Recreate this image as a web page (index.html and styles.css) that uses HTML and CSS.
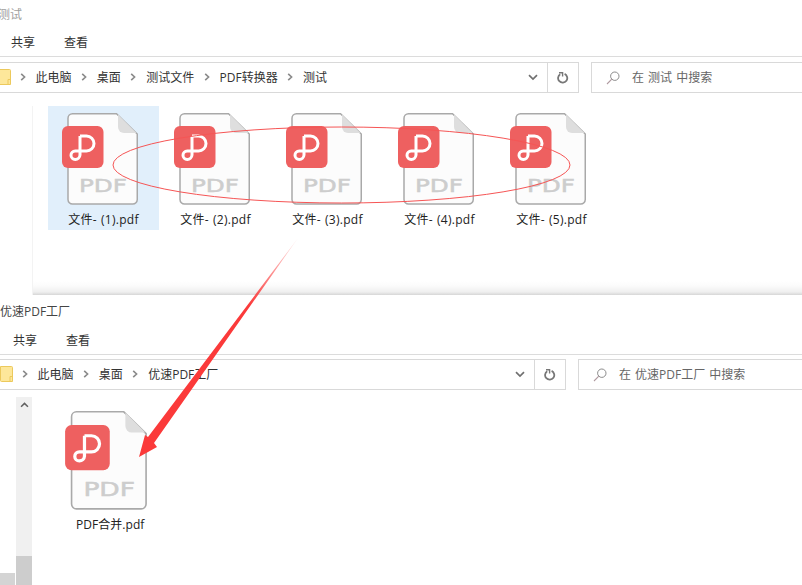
FILE: index.html
```html
<!DOCTYPE html>
<html lang="zh-CN">
<head>
<meta charset="utf-8">
<title>PDF合并</title>
<link rel="stylesheet" href="styles.css">
</head>
<body>
<svg class="defs" width="0" height="0" aria-hidden="true">
  <symbol id="pdf" viewBox="0 0 76 92">
    <path class="page" d="M10.5 .75H54.5L75.25 21V86.5a4.5 4.5 0 0 1-4.5 4.5H10.5a4.5 4.5 0 0 1-4.5-4.5V5.25a4.5 4.5 0 0 1 4.5-4.5Z"/>
    <path class="fold" d="M56 1.5L74.5 20H62a6 6 0 0 1-6-6Z"/>
    <rect class="badge" x="0" y="13" width="41.5" height="42" rx="6"/>
    <path class="logo" d="M18 23H24.5a7.5 7.5 0 0 1 0 15H13.2a4.2 4.2 0 0 0 0 8.4a4.7 4.7 0 0 0 4.8-4.4V23"/>
    <text class="pdfword" x="17" y="79" textLength="48" lengthAdjust="spacingAndGlyphs">PDF</text>
  </symbol>
  <symbol id="chev" viewBox="0 0 6 8"><path d="M1.2 .8L4.6 4L1.2 7.2" fill="none" stroke="#8a8a8a" stroke-width="1.6"/></symbol>
  <symbol id="folder" viewBox="0 0 13 16"><path d="M.5 .5H11.5a1 1 0 0 1 1 1V15.5H1.5a1 1 0 0 1-1-1Z" fill="#fde79a" stroke="#ecc95c"/><path d="M10 15.5V10.5H12.5" fill="none" stroke="#ecc95c"/></symbol>
  <symbol id="down" viewBox="0 0 10 7"><path d="M1 1.2L5 5L9 1.2" fill="none" stroke="#707070" stroke-width="1.7"/></symbol>
  <symbol id="refresh" viewBox="0 0 12 12"><path d="M7.6 1.9A4.6 4.6 0 1 1 3.2 2.2" fill="none" stroke="#777" stroke-width="1.8"/><path d="M2 .8H5.6V4.4" fill="none" stroke="#777" stroke-width="1.4"/></symbol>
  <symbol id="search" viewBox="0 0 14 14"><circle cx="8.8" cy="5.2" r="4.2" fill="none" stroke="#8a8a8a"/><path d="M5.8 8.2L1 13" stroke="#b09aa0" stroke-width="1.1"/></symbol>
</svg>

<div class="screen">
  <section class="window window-top">
    <div class="title">测试</div>
    <nav class="ribbon"><span>共享</span><span>查看</span></nav>
    <div class="toolbar">
      <div class="address">
        <div class="crumbs">
          <svg class="folder"><use href="#folder"/></svg>
          <svg class="chev"><use href="#chev"/></svg><span>此电脑</span>
          <svg class="chev"><use href="#chev"/></svg><span>桌面</span>
          <svg class="chev"><use href="#chev"/></svg><span>测试文件</span>
          <svg class="chev"><use href="#chev"/></svg><span>PDF转换器</span>
          <svg class="chev"><use href="#chev"/></svg><span>测试</span>
        </div>
        <svg class="down"><use href="#down"/></svg>
        <div class="refresh"><svg><use href="#refresh"/></svg></div>
      </div>
      <div class="searchbox"><svg><use href="#search"/></svg><span>在 测试 中搜索</span></div>
    </div>
    <div class="content content-top">
      <div class="files">
        <figure class="file selected"><svg class="icon"><use href="#pdf"/></svg><figcaption>文件- (1).pdf</figcaption></figure>
        <figure class="file"><svg class="icon"><use href="#pdf"/></svg><figcaption>文件- (2).pdf</figcaption></figure>
        <figure class="file"><svg class="icon"><use href="#pdf"/></svg><figcaption>文件- (3).pdf</figcaption></figure>
        <figure class="file"><svg class="icon"><use href="#pdf"/></svg><figcaption>文件- (4).pdf</figcaption></figure>
        <figure class="file"><svg class="icon"><use href="#pdf"/></svg><figcaption>文件- (5).pdf</figcaption></figure>
      </div>
    </div>
  </section>

  <section class="window window-bottom">
    <div class="title">优速PDF工厂</div>
    <nav class="ribbon"><span>共享</span><span>查看</span></nav>
    <div class="toolbar">
      <div class="address">
        <div class="crumbs">
          <svg class="folder"><use href="#folder"/></svg>
          <svg class="chev"><use href="#chev"/></svg><span>此电脑</span>
          <svg class="chev"><use href="#chev"/></svg><span>桌面</span>
          <svg class="chev"><use href="#chev"/></svg><span>优速PDF工厂</span>
        </div>
        <svg class="down"><use href="#down"/></svg>
        <div class="refresh"><svg><use href="#refresh"/></svg></div>
      </div>
      <div class="searchbox"><svg><use href="#search"/></svg><span>在 优速PDF工厂 中搜索</span></div>
    </div>
    <div class="content content-bottom">
      <div class="gutter"><div class="corner"></div></div>
      <div class="scrollbar">
        <svg class="up" viewBox="0 0 10 7"><path d="M1 5.5L5 1.6L9 5.5" fill="none" stroke="#606060" stroke-width="1.8"/></svg>
        <div class="thumb"></div>
      </div>
      <figure class="file file-large"><svg class="icon"><use href="#pdf"/></svg><figcaption>PDF合并.pdf</figcaption></figure>
    </div>
  </section>

  <svg class="markup" viewBox="0 0 802 585" aria-hidden="true">
    <defs>
      <linearGradient id="fade" gradientUnits="userSpaceOnUse" x1="298" y1="238" x2="250" y2="306">
        <stop offset="0" stop-color="#fb3a3a" stop-opacity=".1"/>
        <stop offset="1" stop-color="#fb3a3a"/>
      </linearGradient>
    </defs>
    <ellipse cx="341.5" cy="165" rx="228.5" ry="38" fill="none" stroke="#f65555" stroke-width="1"/>
    <polygon points="298,238 154,443 157,447 139,457 145,435 148,437" fill="url(#fade)"/>
  </svg>
</div>
</body>
</html>
```
FILE: styles.css
```css
* { box-sizing: border-box; }
html, body { margin: 0; padding: 0; background: #fff; }
body {
  font-family: "Open Sans", "Noto Sans CJK SC", sans-serif;
  font-size: 12px;
  color: #222;
}
.defs { position: absolute; }
.screen {
  position: relative;
  width: 802px;
  height: 585px;
  overflow: hidden;
}
.markup {
  position: absolute;
  inset: 0;
  width: 802px;
  height: 585px;
  pointer-events: none;
}

/* windows */
.window { display: flex; flex-direction: column; }
.window-top { height: 295px; }
.window-bottom { height: 290px; }
.title {
  display: flex;
  align-items: center;
  color: #444;
}
.window-top .title { height: 28px; margin-left: -2px; color: #a0a0a0; }
.window-bottom .title { height: 30px; padding-top: 2px; }
.ribbon {
  display: flex;
  gap: 29px;
  align-items: center;
  border-bottom: 1px solid #dcdcdc;
  color: #333;
}
.window-top .ribbon { height: 29px; padding-left: 11px; }
.window-bottom .ribbon { height: 30px; padding-left: 13px; }

/* toolbar */
.toolbar {
  display: flex;
  gap: 12px;
  height: 31px;
  flex: none;
}
.window-top .toolbar { margin-top: 5px; }
.window-bottom .toolbar { margin-top: 4px; }
.address {
  display: flex;
  align-items: center;
  border: 1px solid #d9d9d9;
  border-left: 0;
}
.window-top .address { width: 579px; }
.window-bottom .address { width: 566px; }
.crumbs {
  display: flex;
  align-items: center;
  gap: 9.7px;
  flex: 1;
  padding-bottom: 2px;
  color: #333;
}
.window-top .crumbs { margin-left: -2px; }
.folder { width: 13px; height: 16px; flex: none; margin-right: -1px; }
.chev { width: 6px; height: 8px; flex: none; }
.down { width: 10px; height: 7px; flex: none; margin-right: 9px; }
.refresh {
  display: flex;
  align-items: center;
  justify-content: center;
  width: 31px;
  height: 100%;
  border-left: 1px solid #d9d9d9;
}
.refresh svg { width: 12px; height: 12px; }
.searchbox {
  display: flex;
  align-items: center;
  flex: 1;
  gap: 12px;
  padding: 0 0 2px 14px;
  border: 1px solid #d9d9d9;
  border-right: 0;
  color: #666;
  word-spacing: 1px;
  margin-right: -20px;
}
.searchbox svg { width: 14px; height: 14px; flex: none; margin-top: 2px; }

/* file panes */
.content { flex: 1; min-height: 0; }
.content-top {
  margin-top: 13px;
  margin-left: 32px;
  border-left: 1px solid #f3f3f3;
  padding-left: 15px;
  background: linear-gradient(to top, #d6d6d6 0, #efefef 3px, #fbfbfb 9px, #fff 14px);
}
.files { display: flex; gap: 1px; }
.file {
  display: flex;
  flex-direction: column;
  align-items: center;
  width: 111px;
  height: 124px;
  margin: 0;
  padding-top: 7px;
}
.file .icon { width: 76px; height: 92px; margin-right: 7px; flex: none; }
.file figcaption { margin-top: 6px; line-height: 18px; color: #222; white-space: nowrap; letter-spacing: .3px; word-spacing: .5px; }
.selected { background: #e1effb; }

.content-bottom { display: flex; margin-top: 7px; }
.gutter {
  display: flex;
  align-items: flex-end;
  width: 16px;
  flex: none;
}
.corner { width: 15px; height: 12px; background: #d4d4d4; }
.scrollbar {
  display: flex;
  flex-direction: column;
  justify-content: space-between;
  align-items: center;
  width: 16px;
  flex: none;
  background: #f0f0f0;
  padding-top: 5px;
}
.up { width: 9px; height: 6px; flex: none; }
.thumb { width: 100%; height: 29px; background: #cdcdcd; }
.file-large {
  width: 112px;
  height: auto;
  margin-left: 23px;
  padding-top: 14px;
  align-items: flex-start;
}
.file-large .icon { width: 82px; height: 99px; margin: 0 0 0 10px; }
.file-large figcaption { margin-top: 6px; margin-left: 21px; letter-spacing: .05px; }

/* PDF icon parts */
.page { fill: #fcfcfc; stroke: #a9a9a9; stroke-width: 1.5; }
.fold { fill: #dedede; }
.badge { fill: #ee6060; }
.logo { fill: none; stroke: #fff; stroke-width: 3; }
.pdfword {
  font-family: "DejaVu Sans", sans-serif;
  font-size: 18px;
  fill: #cdcdcd;
  stroke: #cdcdcd;
  stroke-width: .5px;
}
```
